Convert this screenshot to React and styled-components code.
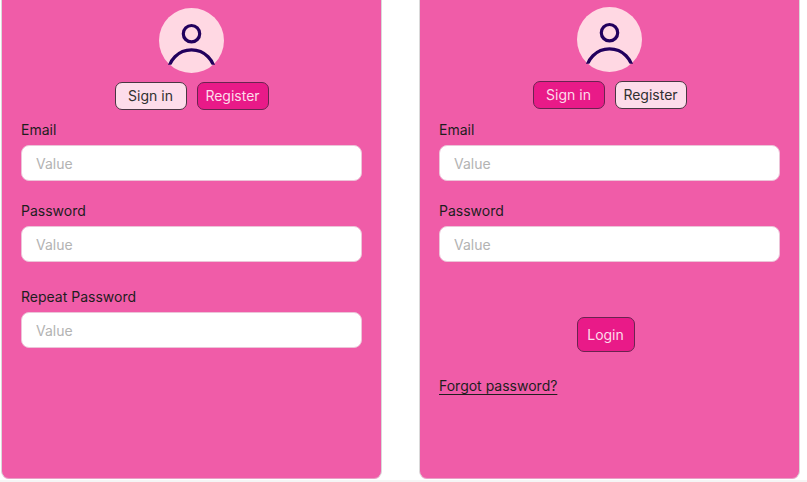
import React, { useId } from "react";
import styled, { createGlobalStyle } from "styled-components";

const GlobalStyle = createGlobalStyle`
  *, *::before, *::after { box-sizing: border-box; }
  body {
    margin: 0;
    background: #ffffff;
    color: #1e1e1e;
    font-family: Inter, "Liberation Sans", sans-serif;
    font-size: 14px;
    font-weight: 400;
    line-height: 20px;
  }
  button, input { font: inherit; }
`;

const Page = styled.main`
  display: grid;
  grid-template-columns: 1fr 1fr;
  gap: 37px;
  min-height: 100vh;
  padding: 0 7px 1px 1px;
  border-bottom: 2px solid #f5f5f5;
`;

const Card = styled.section`
  display: flex;
  flex-direction: column;
  padding: ${(p) => p.$top}px 19px 24px;
  background: #f05ca8;
  border: 1px solid #d9d9d9;
  border-top: 0;
  border-bottom-color: #e8a0c6;
  border-radius: 0 0 8px 8px;
`;

const AvatarIcon = styled.svg`
  display: block;
  align-self: center;
  width: 65px;
  height: 65px;
`;

const Tabs = styled.div`
  display: flex;
  justify-content: center;
  gap: 10px;
  margin-top: 9px;
`;

const Button = styled.button`
  display: flex;
  align-items: center;
  justify-content: center;
  padding: 0;
  border: 1px solid ${(p) => (p.$filled ? "#6b2350" : "#4a3542")};
  border-radius: 7px;
  background: ${(p) => (p.$filled ? "#e91a88" : "#fddcea")};
  color: ${(p) => (p.$filled ? "#fddcea" : "#303030")};
  cursor: pointer;
`;

const Tab = styled(Button)`
  width: 72px;
  height: 28px;
`;

const Form = styled.form`
  display: flex;
  flex-direction: column;
  margin-top: ${(p) => p.$top}px;
`;

const FieldBox = styled.div`
  display: flex;
  flex-direction: column;
  gap: 5px;
  margin-bottom: ${(p) => p.$after}px;
`;

const Input = styled.input`
  width: 100%;
  height: 36px;
  padding: 0 14px;
  border: 1px solid #ecc4d8;
  border-radius: 8px;
  background: #ffffff;
  color: #1e1e1e;
  outline-offset: 1px;
  &::placeholder { color: #b3b3b3; opacity: 1; }
`;

const LoginButton = styled(Button)`
  align-self: center;
  width: 58px;
  height: 35px;
  margin-right: 8px;
`;

const ForgotLink = styled.a`
  align-self: flex-start;
  margin-top: 24px;
  color: #1e1e1e;
  text-decoration: underline;
  text-decoration-thickness: 1px;
  text-underline-offset: 3px;
`;

function Avatar() {
  const clipId = useId();
  return (
    <AvatarIcon viewBox="0 0 65 65" aria-hidden="true">
      <clipPath id={clipId}>
        <path d="M0 0H65V56.8H0Z" />
      </clipPath>
      <circle cx="32.5" cy="32.5" r="32.5" fill="#ffd8e3" />
      <g fill="none" stroke="#22005d" strokeWidth="3.2">
        <circle cx="32.5" cy="25.7" r="8.2" />
        <circle cx="32.5" cy="65.3" r="23.4" clipPath={`url(#${clipId})`} />
      </g>
    </AvatarIcon>
  );
}

function Field({ label, type, after }) {
  const id = useId();
  return (
    <FieldBox $after={after}>
      <label htmlFor={id}>{label}</label>
      <Input id={id} type={type} placeholder="Value" />
    </FieldBox>
  );
}

function ModeTabs({ active }) {
  return (
    <Tabs>
      <Tab type="button" $filled={active === "signin"} aria-pressed={active === "signin"}>
        Sign in
      </Tab>
      <Tab type="button" $filled={active === "register"} aria-pressed={active === "register"}>
        Register
      </Tab>
    </Tabs>
  );
}

export default function App() {
  return (
    <>
      <GlobalStyle />
      <Page>
        <Card $top={8} aria-label="Register">
          <Avatar />
          <ModeTabs active="register" />
          <Form $top={10}>
            <Field label="Email" type="email" after={20} />
            <Field label="Password" type="password" after={25} />
            <Field label="Repeat Password" type="password" after={0} />
          </Form>
        </Card>
        <Card $top={7} aria-label="Sign in">
          <Avatar />
          <ModeTabs active="signin" />
          <Form $top={11} onSubmit={(e) => e.preventDefault()}>
            <Field label="Email" type="email" after={20} />
            <Field label="Password" type="password" after={55} />
            <LoginButton type="submit" $filled>
              Login
            </LoginButton>
            <ForgotLink href="#forgot">Forgot password?</ForgotLink>
          </Form>
        </Card>
      </Page>
    </>
  );
}
